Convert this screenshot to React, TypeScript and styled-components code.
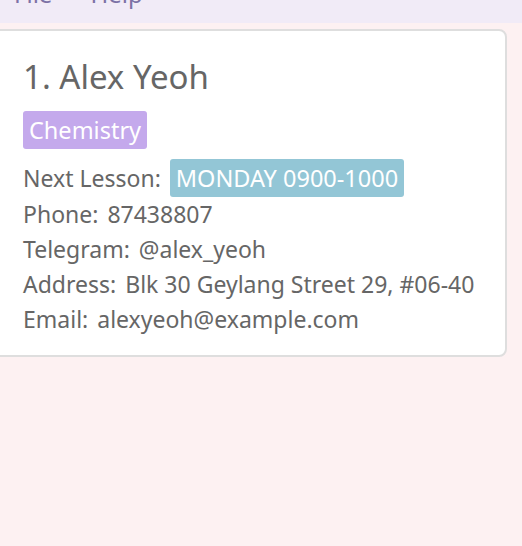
import React from 'react';
import styled, { createGlobalStyle } from 'styled-components';

const GlobalStyle = createGlobalStyle`
  html, body {
    margin: 0;
    padding: 0;
    background: #fdf1f2;
    overflow: hidden;
  }
  body {
    font-family: "Noto Sans", "Open Sans", sans-serif;
  }
`;

const Page = styled.div`
  width: 522px;
  height: 546px;
  background: #fdf1f2;
  display: flex;
  flex-direction: column;
`;

// 顶部菜单栏（被滚动截掉上半部分）
const MenuBar = styled.div`
  height: 23px;
  background: #f1ebf7;
  display: flex;
  gap: 38px;
  padding-left: 14px;
  overflow: hidden;
`;

const MenuItem = styled.span`
  font-size: 24px;
  line-height: 24px;
  margin-top: -18px;
  color: #7d72a6;
`;

const Card = styled.div`
  margin: 6px 15px 0 -10px;
  background: #fff;
  border: 2px solid #dedede;
  border-radius: 8px;
  padding: 24px 20px 18px 31px;
  display: flex;
  flex-direction: column;
  align-items: flex-start;
`;

const Name = styled.div`
  font-size: 33px;
  line-height: 44px;
  color: #666;
  margin-bottom: 12px;
`;

const Tag = styled.span<{ $bg: string }>`
  display: inline-block;
  background: ${(p) => p.$bg};
  color: #fff;
  border-radius: 3px;
  padding: 0 6px;
  font-size: 23.5px;
  line-height: 38px;
`;

const Field = styled.div`
  display: flex;
  align-items: center;
  gap: 9px;
  font-size: 23px;
  line-height: 35px;
  color: #666;
  white-space: nowrap;
`;

const LessonRow = styled(Field)`
  margin-top: 10px;
  line-height: 38px;
`;

export default function App() {
  return (
    <Page>
      <GlobalStyle />
      <MenuBar>
        <MenuItem>File</MenuItem>
        <MenuItem>Help</MenuItem>
      </MenuBar>
      <Card>
        <Name>1. Alex Yeoh</Name>
        <Tag $bg="#c4a9ec">Chemistry</Tag>
        <LessonRow>
          <span>Next Lesson:</span>
          <Tag $bg="#93c6d6">MONDAY 0900-1000</Tag>
        </LessonRow>
        <Field>
          <span>Phone:</span>
          <span>87438807</span>
        </Field>
        <Field>
          <span>Telegram:</span>
          <span>@alex_yeoh</span>
        </Field>
        <Field>
          <span>Address:</span>
          <span>Blk 30 Geylang Street 29, #06-40</span>
        </Field>
        <Field>
          <span>Email:</span>
          <span>alexyeoh@example.com</span>
        </Field>
      </Card>
    </Page>
  );
}
